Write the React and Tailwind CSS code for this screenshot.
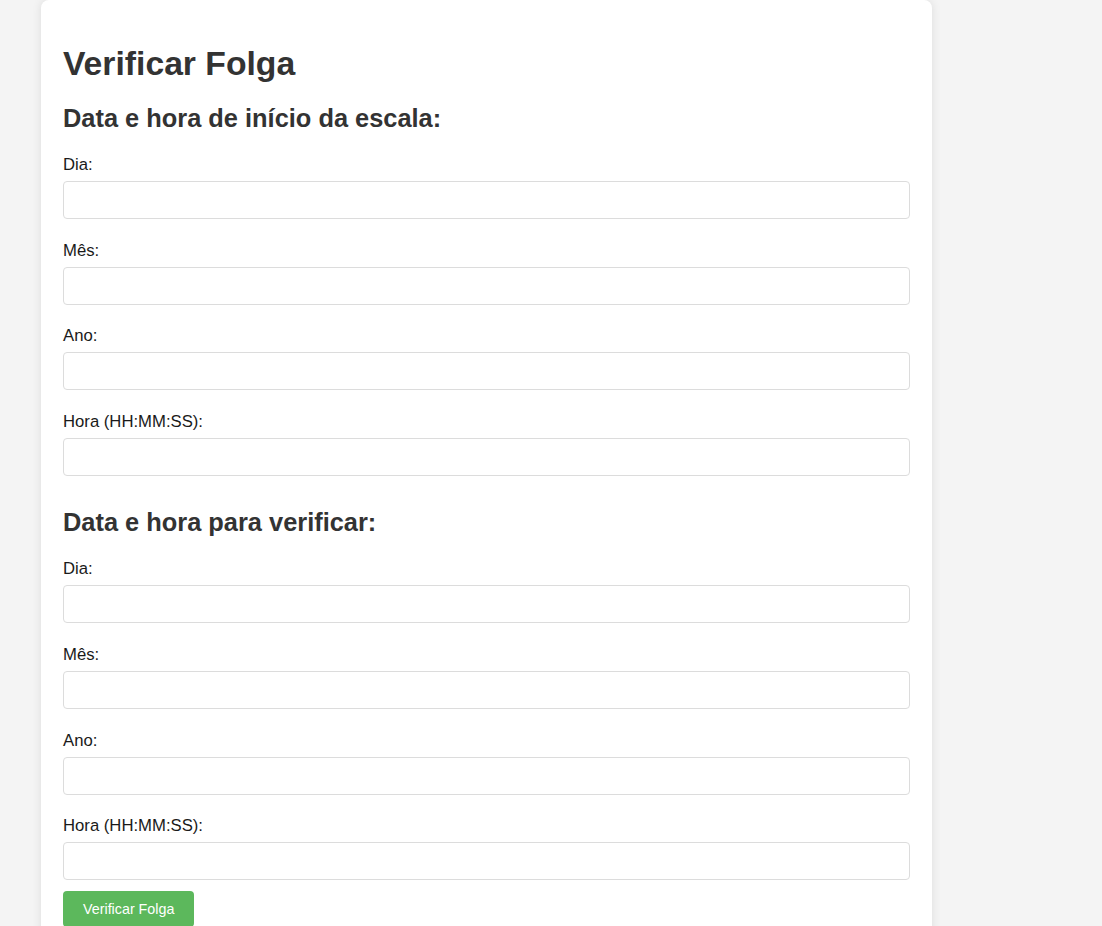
import React from "react";

function Field({ label, first }) {
  return (
    <div className={first ? "" : "mt-[21.67px]"}>
      <label className="block text-[16.7px] leading-[19px] text-[#1a1a1a]">{label}</label>
      <input
        type="text"
        className="mt-[7px] block h-[38px] w-full rounded-[4px] border border-[#dcdcdc] bg-white px-[10px] outline-none"
      />
    </div>
  );
}

export default function App() {
  const fields = ["Dia:", "Mês:", "Ano:", "Hora (HH:MM:SS):"];
  return (
    <div
      className="min-h-screen bg-[#f4f4f4]"
      style={{ fontFamily: '"Liberation Sans", Arial, sans-serif' }}
    >
      <div className="ml-[41px] w-[891px] rounded-[8px] bg-white px-[22px] pt-[44px] pb-[20px] shadow-[0_0_10px_rgba(0,0,0,0.1)]">
        <h1 className="text-[33.7px] font-bold leading-[38px] text-[#333]">Verificar Folga</h1>
        <h2 className="mt-[22px] text-[25.4px] font-bold leading-[29px] text-[#333]">
          Data e hora de início da escala:
        </h2>
        <div className="mt-[22px]">
          {fields.map((f, i) => (
            <Field key={"a" + i} label={f} first={i === 0} />
          ))}
        </div>
        <h2 className="mt-[32.5px] text-[25.4px] font-bold leading-[29px] text-[#333]">
          Data e hora para verificar:
        </h2>
        <div className="mt-[22px]">
          {fields.map((f, i) => (
            <Field key={"b" + i} label={f} first={i === 0} />
          ))}
        </div>
        <button className="mt-[11px] rounded-[4px] bg-[#5cb85c] px-[20px] py-[10px] text-[14.3px] leading-[16px] text-white">
          Verificar Folga
        </button>
      </div>
    </div>
  );
}
